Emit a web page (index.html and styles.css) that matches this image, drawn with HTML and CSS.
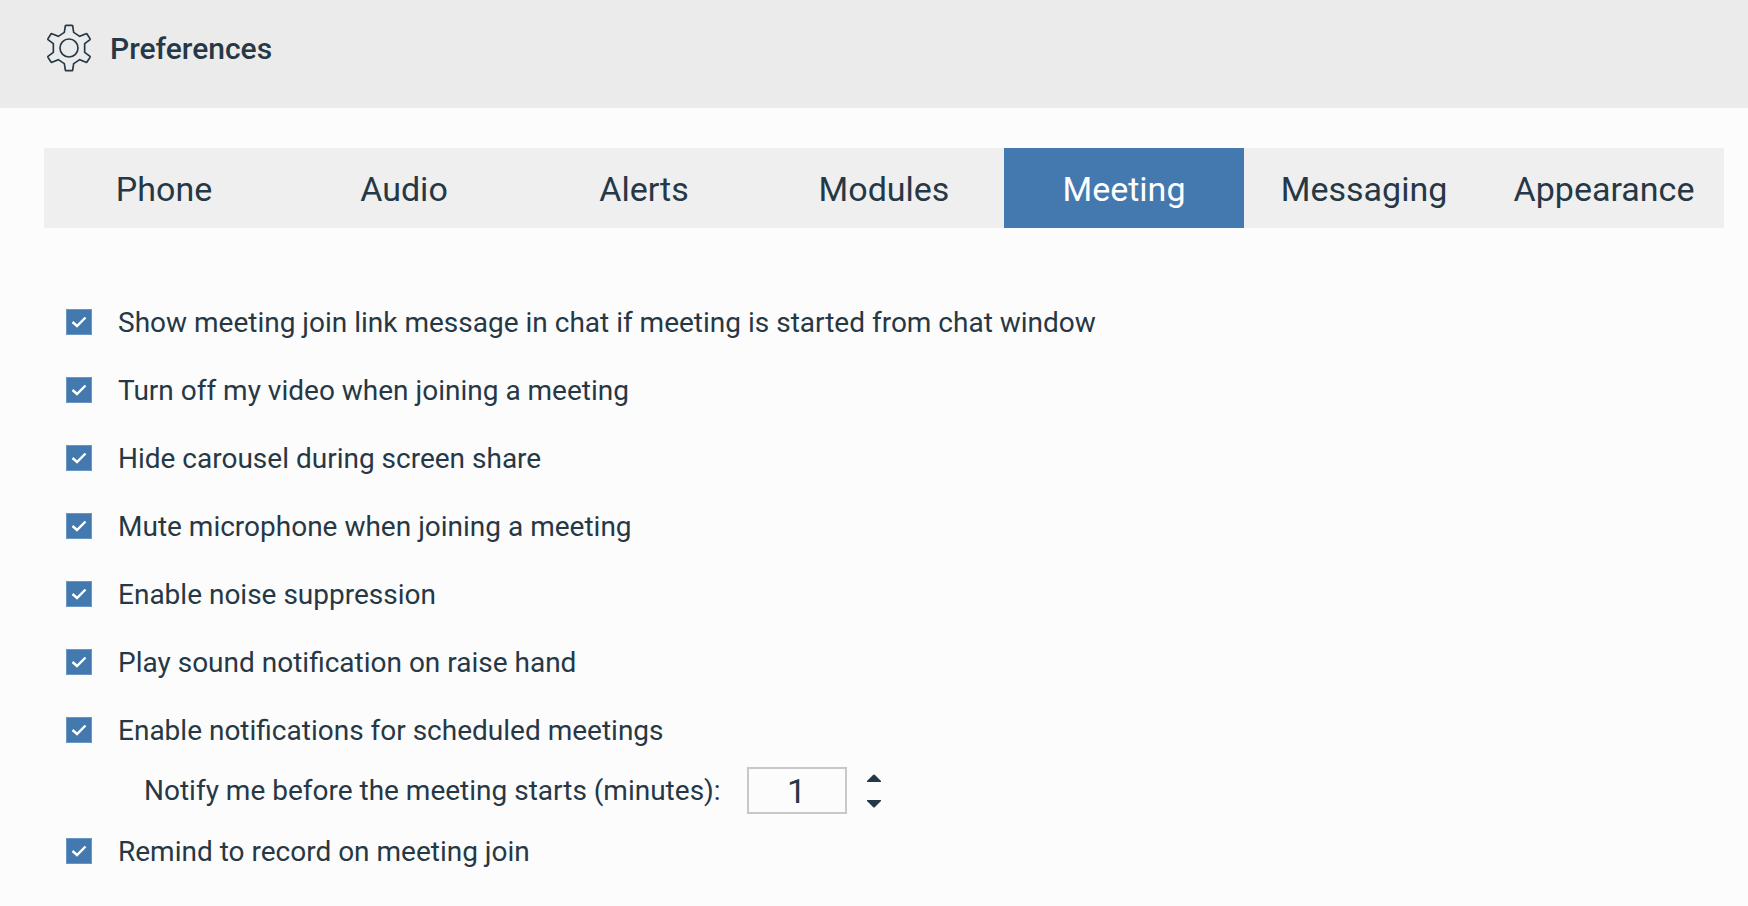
FILE: index.html
```
<!DOCTYPE html>
<html lang="en">

<head>
    <meta charset="UTF-8">
    <meta name="viewport" content="width=device-width, initial-scale=1.0">
    <title>Preferences</title>
    <link rel="stylesheet" href="styles.css">
</head>

<body>
    <header class="header">
        <svg class="gear" viewBox="138 72 138 144" aria-hidden="true">
            <path d="M198 76 L216 76 Q218 76 218 78 L221 97 L239 109 L258 101 Q260 100 261 102 L270 116 Q271 118 270 119 L254 131 L254 157 L270 169 Q271 170 270 172 L261 186 Q260 188 258 187 L239 179 L221 191 L218 210 Q218 212 216 212 L198 212 Q196 212 196 210 L193 191 L175 179 L156 187 Q154 188 153 186 L144 172 Q143 170 144 169 L160 157 L160 131 L144 119 Q143 118 144 116 L153 102 Q154 100 156 101 L175 109 L193 97 L196 78 Q196 76 198 76 Z" />
            <circle cx="207" cy="144" r="27" />
        </svg>
        <h1 class="title">Preferences</h1>
    </header>

    <nav class="tabs">
        <button type="button" class="tab">Phone</button>
        <button type="button" class="tab">Audio</button>
        <button type="button" class="tab">Alerts</button>
        <button type="button" class="tab">Modules</button>
        <button type="button" class="tab active">Meeting</button>
        <button type="button" class="tab">Messaging</button>
        <button type="button" class="tab">Appearance</button>
    </nav>

    <form class="options">
        <label class="option"><input type="checkbox" class="check" checked>Show meeting join link message in chat if meeting is started from chat window</label>
        <label class="option"><input type="checkbox" class="check" checked>Turn off my video when joining a meeting</label>
        <label class="option"><input type="checkbox" class="check" checked>Hide carousel during screen share</label>
        <label class="option"><input type="checkbox" class="check" checked>Mute microphone when joining a meeting</label>
        <label class="option"><input type="checkbox" class="check" checked>Enable noise suppression</label>
        <label class="option"><input type="checkbox" class="check" checked>Play sound notification on raise hand</label>
        <label class="option"><input type="checkbox" class="check" checked>Enable notifications for scheduled meetings</label>
        <div class="sub-option">
            <label for="minutes">Notify me before the meeting starts (minutes):</label>
            <input type="text" id="minutes" class="minutes" inputmode="numeric" value="1">
            <div class="stepper">
                <button type="button" class="step" id="stepUp" aria-label="More minutes">
                    <svg class="arrow" viewBox="0 0 14 8"><path d="M0 8 L0 7 L6 1 Q7 0 8 1 L14 7 L14 8 Z" /></svg>
                </button>
                <button type="button" class="step" id="stepDown" aria-label="Fewer minutes">
                    <svg class="arrow" viewBox="0 0 14 8"><path d="M0 0 L14 0 L14 1 L8 7 Q7 8 6 7 L0 1 Z" /></svg>
                </button>
            </div>
        </div>
        <label class="option"><input type="checkbox" class="check" checked>Remind to record on meeting join</label>
    </form>

    <script>
        const tabs = document.querySelectorAll('.tab');
        const minutes = document.getElementById('minutes');

        tabs.forEach(tab => {
            tab.addEventListener('click', function () {
                tabs.forEach(t => t.classList.remove('active'));
                tab.classList.add('active');
            });
        });

        function changeMinutes(step) {
            const value = parseInt(minutes.value, 10) || 1;
            minutes.value = Math.max(1, value + step);
        }

        document.getElementById('stepUp').addEventListener('click', () => changeMinutes(1));
        document.getElementById('stepDown').addEventListener('click', () => changeMinutes(-1));
    </script>
</body>

</html>
```
FILE: styles.css
```
* {
    box-sizing: border-box;
}

body {
    margin: 0;
    min-height: 100vh;
    background-color: #fcfcfc;
    color: #263845;
    font-family: Roboto, "Liberation Sans", sans-serif;
    font-size: 28px;
}

button,
input {
    font-family: inherit;
    color: inherit;
}

.header {
    display: flex;
    align-items: center;
    gap: 18px;
    padding: 24px 46px 34px;
    background-color: #ebebeb;
}

.gear {
    width: 46px;
    height: 48px;
    margin-bottom: 2px;
    fill: none;
    stroke: #263845;
    stroke-width: 5;
}

.title {
    margin: 0;
    font-size: 30px;
    line-height: 50px;
    font-weight: 500;
}

.tabs {
    display: flex;
    margin: 40px 24px 0 44px;
    background-color: #efefef;
}

.tab {
    flex: 1 1 0;
    height: 80px;
    padding: 2px 0 0;
    border: none;
    background: none;
    font-size: 34px;
    cursor: pointer;
}

.tab.active {
    background-color: #4379af;
    color: #fff;
}

.options {
    display: flex;
    flex-direction: column;
    padding: 60px 66px 20px;
}

.option {
    display: flex;
    align-items: center;
    gap: 26px;
    min-height: 68px;
}

.check {
    appearance: none;
    flex: none;
    width: 26px;
    height: 26px;
    margin: 0;
    border: 1px solid #6897c3;
}

.check:checked {
    background: #4379af url("data:image/svg+xml,%3Csvg xmlns='http://www.w3.org/2000/svg' viewBox='0 0 24 24'%3E%3Cpath d='M5.5 12 L10 16 L18.5 7.5' fill='none' stroke='%23fff' stroke-width='2.4'/%3E%3C/svg%3E") center / 24px no-repeat;
}

.sub-option {
    display: flex;
    align-items: center;
    min-height: 53px;
    padding-left: 78px;
}

.minutes {
    width: 100px;
    height: 47px;
    margin: 0 20px 0 26px;
    padding: 0;
    border: 2px solid #c8c8c8;
    background: none;
    font-size: 34px;
    text-align: center;
}

.stepper {
    display: flex;
    flex-direction: column;
    gap: 18px;
}

.step {
    display: flex;
    padding: 0;
    border: none;
    background: none;
    cursor: pointer;
}

.arrow {
    width: 14px;
    height: 8px;
    fill: #263845;
}
```
